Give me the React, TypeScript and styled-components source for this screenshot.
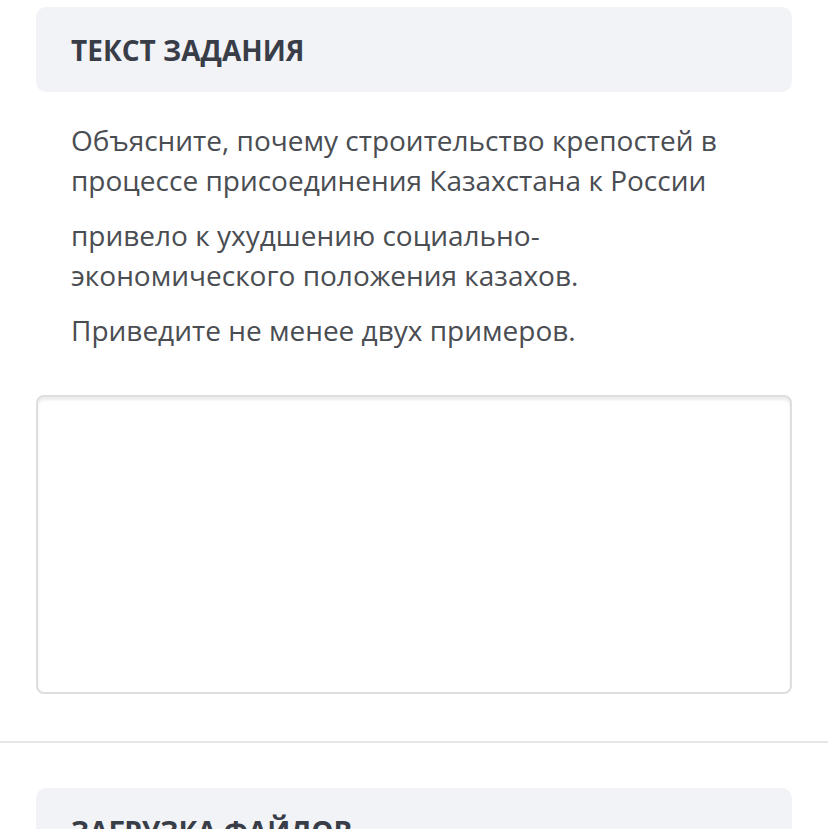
import { createGlobalStyle } from 'styled-components'
import styled from 'styled-components'

const GlobalStyle = createGlobalStyle`
  html, body {
    margin: 0;
    padding: 0;
    background: #ffffff;
    font-family: "Open Sans", "Noto Sans", sans-serif;
  }
  * { box-sizing: border-box; }
`

const Page = styled.div`
  padding-top: 7px;
  overflow: hidden;
  height: 829px;
`

const Section = styled.section`
  padding: 0 36px;
`

const SectionHeader = styled.div`
  background: #f2f3f7;
  border-radius: 10px;
  height: 85px;
  display: flex;
  align-items: center;
  padding: 0 35px;
`

const SectionTitle = styled.h2`
  margin: 0;
  font-size: 28px;
  font-weight: 700;
  color: #383d48;
`

const TaskText = styled.div`
  padding: 28px 35px 45px;
  color: #4a4d52;
  font-size: 28px;
  line-height: 40px;
`

const Para = styled.p`
  margin: 0 0 15px;
  &:last-child { margin-bottom: 0; }
`

const Answer = styled.textarea`
  display: block;
  width: 100%;
  height: 299px;
  border: 2px solid #dedede;
  border-radius: 8px;
  box-shadow: inset 0 3px 3px rgba(0, 0, 0, 0.08);
  resize: none;
  outline: none;
  font: inherit;
  font-size: 28px;
  padding: 12px 16px;
`

const Divider = styled.hr`
  margin: 47px 0 45px;
  border: none;
  border-top: 2px solid #e6e6e6;
`

export default function App() {
  return (
    <Page>
      <GlobalStyle />
      <Section>
        <SectionHeader>
          <SectionTitle>ТЕКСТ ЗАДАНИЯ</SectionTitle>
        </SectionHeader>
        <TaskText>
          <Para>Объясните, почему строительство крепостей в процессе присоединения Казахстана к России</Para>
          <Para>привело к ухудшению социально-экономического положения казахов.</Para>
          <Para>Приведите не менее двух примеров.</Para>
        </TaskText>
        <Answer />
      </Section>
      <Divider />
      <Section>
        <SectionHeader>
          <SectionTitle>ЗАГРУЗКА ФАЙЛОВ</SectionTitle>
        </SectionHeader>
      </Section>
    </Page>
  )
}
